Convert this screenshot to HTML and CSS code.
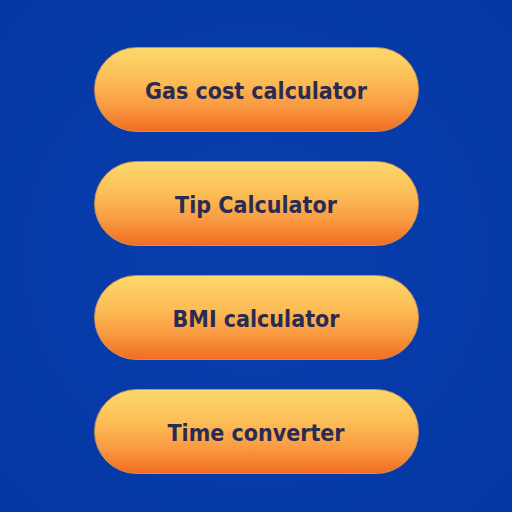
FILE: index.html
```html
<!DOCTYPE html>
<html>
<head>
<meta charset="utf-8">
<link rel="stylesheet" href="styles.css">
</head>
<body>
<div class="screen">
  <div class="menu">
    <div class="btn">Gas cost calculator</div>
    <div class="btn">Tip Calculator</div>
    <div class="btn">BMI calculator</div>
    <div class="btn">Time converter</div>
  </div>
</div>
</body>
</html>
```
FILE: styles.css
```css
html, body {
  margin: 0;
  padding: 0;
}
.screen {
  width: 512px;
  height: 512px;
  background: radial-gradient(circle at 50% 50%, #0a3eab 0%, #063aa8 60%, #0537a2 100%);
  display: flex;
  justify-content: center;
  box-sizing: border-box;
  padding-top: 47px;
}
.menu {
  display: flex;
  flex-direction: column;
  gap: 29px;
}
.btn {
  width: 325px;
  height: 85px;
  box-sizing: border-box;
  border-radius: 43px;
  border: 1px solid #c9935a;
  background: linear-gradient(180deg, #fdd86c 0%, #fcbc55 40%, #f99a42 70%, #f26d22 100%);
  display: flex;
  align-items: center;
  justify-content: center;
  padding-top: 2px;
  font-family: "DejaVu Sans Condensed", "DejaVu Sans", sans-serif;
  font-weight: bold;
  font-size: 23px;
  color: #2b2b52;
}
```
